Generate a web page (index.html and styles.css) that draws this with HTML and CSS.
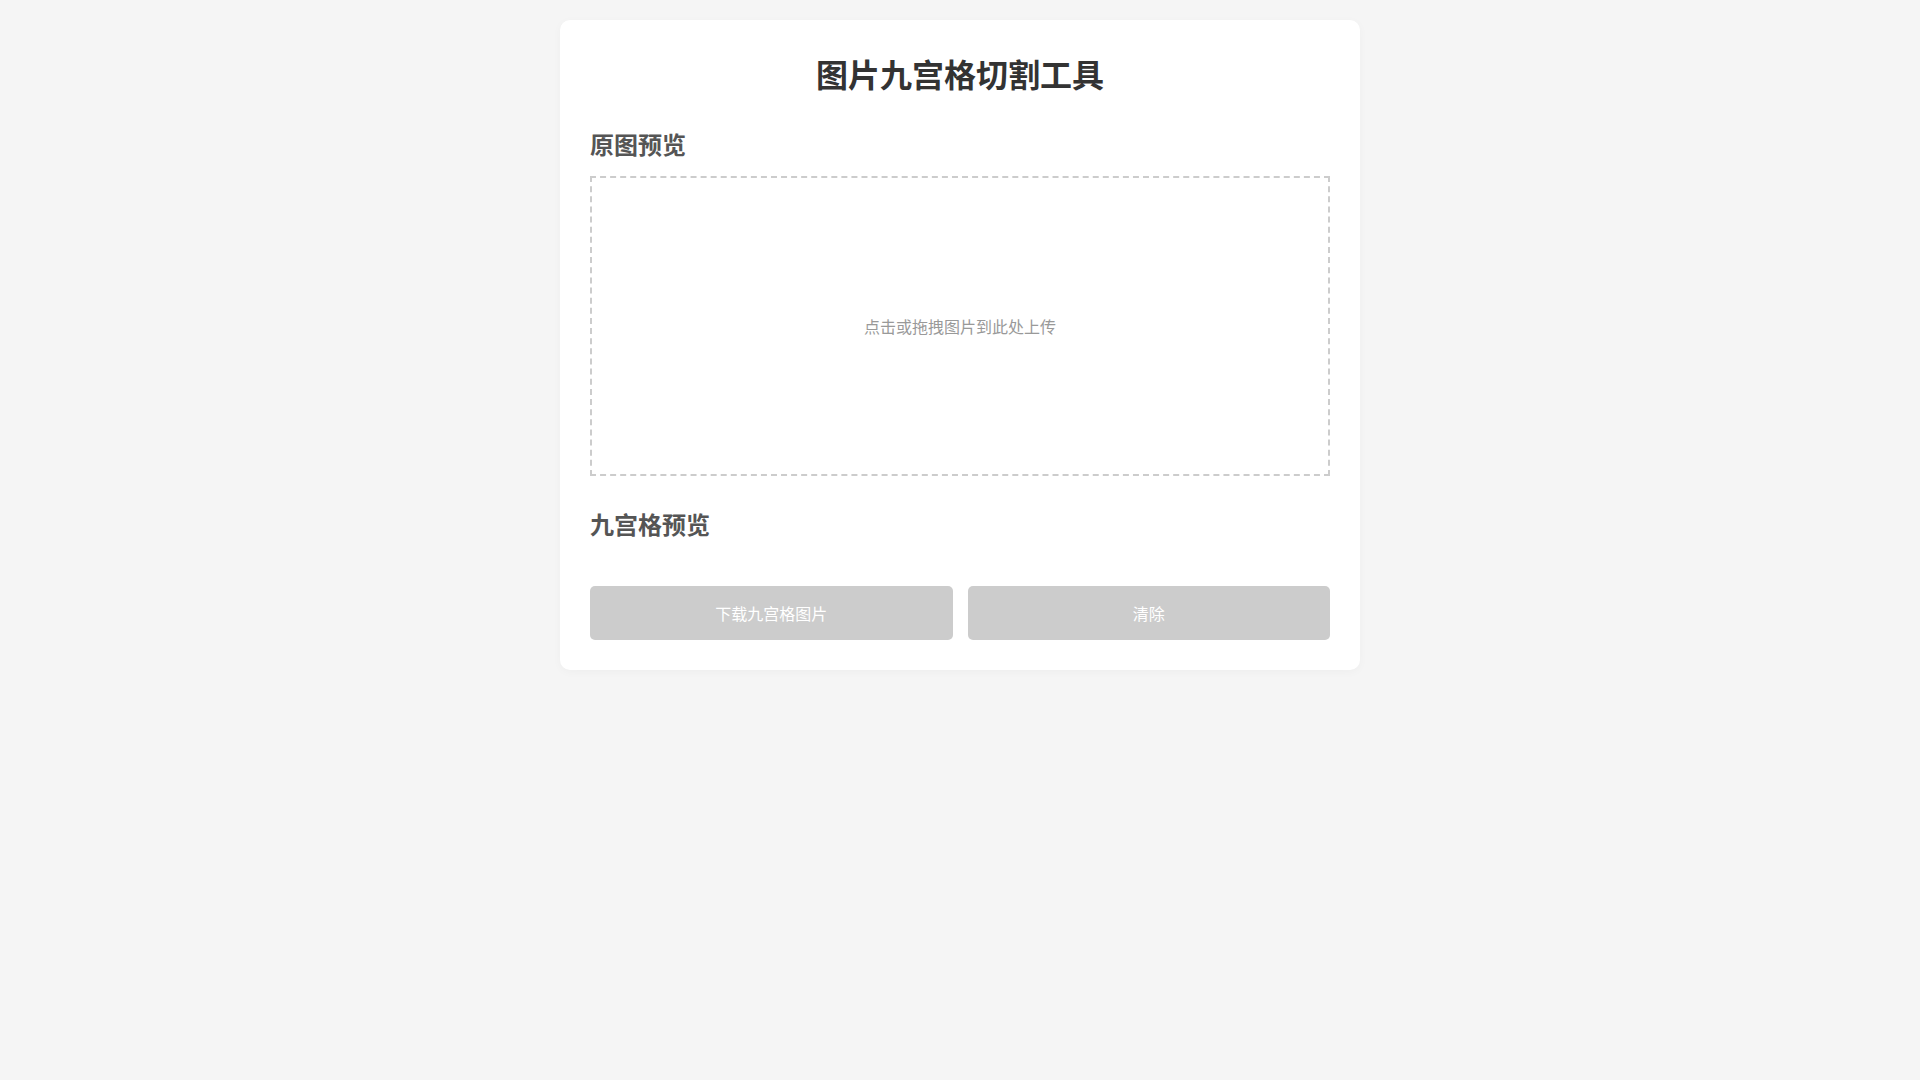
FILE: index.html
```html
<!DOCTYPE html>
<html lang="zh-CN">
<head>
<meta charset="utf-8">
<title>图片九宫格切割工具</title>
<link rel="stylesheet" href="styles.css">
</head>
<body>
<div class="container">
  <h1 class="title">图片九宫格切割工具</h1>
  <h2 class="section-title">原图预览</h2>
  <div class="upload-area">
    <span class="upload-text">点击或拖拽图片到此处上传</span>
  </div>
  <h2 class="section-title grid-title">九宫格预览</h2>
  <div class="grid-preview"></div>
  <div class="actions">
    <button class="btn" disabled>下载九宫格图片</button>
    <button class="btn" disabled>清除</button>
  </div>
</div>
</body>
</html>
```

FILE: styles.css
```css
html, body {
  margin: 0;
  padding: 0;
}
body {
  background: #f5f5f5;
  font-family: "Noto Sans CJK SC", "Noto Sans", sans-serif;
  color: #333;
  padding: 20px 0;
}
.container {
  width: 800px;
  box-sizing: border-box;
  margin: 0 auto;
  background: #fff;
  border-radius: 10px;
  padding: 30px;
  box-shadow: 0 2px 10px rgba(0,0,0,0.03);
}
.title {
  margin: 0 0 32px;
  font-size: 32px;
  line-height: 46px;
  font-weight: 700;
  text-align: center;
  color: #333;
}
.section-title {
  margin: 0 0 16px;
  font-size: 24px;
  line-height: 32px;
  font-weight: 700;
  color: #555;
}
.grid-title {
  margin-top: 32px;
  margin-bottom: 0;
}
.upload-area {
  height: 300px;
  box-sizing: border-box;
  border: 2px dashed #ccc;
  display: flex;
  align-items: center;
  justify-content: center;
}
.upload-text {
  font-size: 16px;
  color: #999;
}
.grid-preview {
  height: 46px;
}
.actions {
  display: flex;
  gap: 15px;
}
.btn {
  flex: 1;
  height: 54px;
  border: none;
  border-radius: 5px;
  background: #ccc;
  color: #fff;
  font-family: "Noto Sans CJK SC", "Noto Sans", sans-serif;
  font-size: 16px;
  padding: 0;
}
```
